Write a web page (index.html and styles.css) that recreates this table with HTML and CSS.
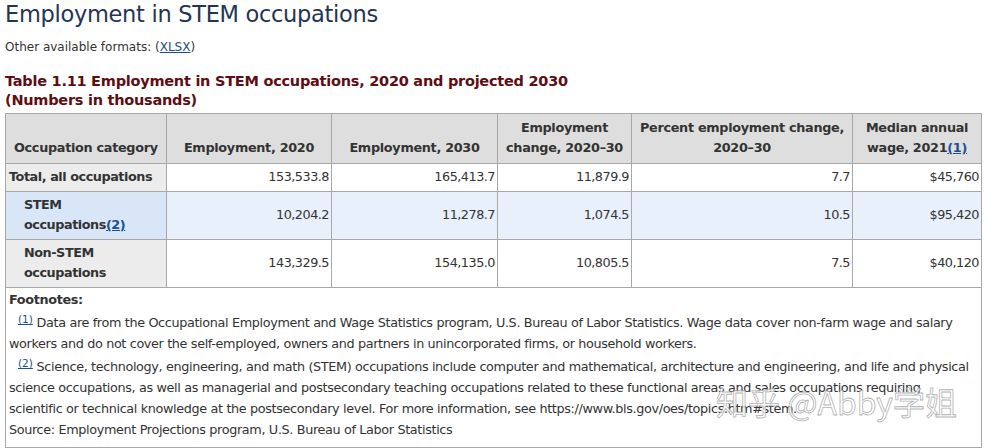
FILE: index.html
```html
<!DOCTYPE html>
<html>
<head>
<meta charset="utf-8">
<link rel="stylesheet" href="styles.css">
</head>
<body>
<div class="page">
  <h1 class="title">Employment in STEM occupations</h1>
  <p class="formats">Other available formats: (<a href="#">XLSX</a>)</p>
  <h2 class="caption">Table 1.11 Employment in STEM occupations, 2020 and projected 2030<br>(Numbers in thousands)</h2>
  <table class="data">
    <colgroup>
      <col class="c1"><col class="c2"><col class="c3"><col class="c4"><col class="c5"><col class="c6">
    </colgroup>
    <thead>
      <tr>
        <th class="lead">Occupation category</th>
        <th>Employment, 2020</th>
        <th>Employment, 2030</th>
        <th>Employment change, 2020–30</th>
        <th>Percent employment change, 2020–30</th>
        <th>Median annual wage, 2021<a href="#">(1)</a></th>
      </tr>
    </thead>
    <tbody>
      <tr class="r-total">
        <th class="stub">Total, all occupations</th>
        <td>153,533.8</td><td>165,413.7</td><td>11,879.9</td><td>7.7</td><td>$45,760</td>
      </tr>
      <tr class="r-stem">
        <th class="stub sub">STEM occupations<a href="#">(2)</a></th>
        <td>10,204.2</td><td>11,278.7</td><td>1,074.5</td><td>10.5</td><td>$95,420</td>
      </tr>
      <tr class="r-non">
        <th class="stub sub">Non-STEM occupations</th>
        <td>143,329.5</td><td>154,135.0</td><td>10,805.5</td><td>7.5</td><td>$40,120</td>
      </tr>
    </tbody>
    <tfoot>
      <tr>
        <td colspan="6" class="notes">
          <div class="notes-head">Footnotes:</div>
          <p class="note"><sup class="ref">(1)</sup> Data are from the Occupational Employment and Wage Statistics program, U.S. Bureau of Labor Statistics. Wage data cover non-farm wage and salary workers and do not cover the self-employed, owners and partners in unincorporated firms, or household workers.</p>
          <p class="note"><sup class="ref">(2)</sup> Science, technology, engineering, and math (STEM) occupations include computer and mathematical, architecture and engineering, and life and physical science occupations, as well as managerial and postsecondary teaching occupations related to these functional areas and sales occupations requiring<br>scientific or technical knowledge at the postsecondary level. For more information, see https://www.bls.gov/oes/topics.htm#stem.</p>
          <p class="source">Source: Employment Projections program, U.S. Bureau of Labor Statistics</p>
        </td>
      </tr>
    </tfoot>
  </table>
  <div class="watermark">知乎 @Abby学姐</div>
</div>
</body>
</html>
```
FILE: styles.css
```css
html, body {
  margin: 0;
  padding: 0;
  background: #ffffff;
}
.page {
  position: relative;
  padding: 0 6px 0 5px;
  font-family: "DejaVu Sans", Verdana, sans-serif;
  color: #333333;
}
.title {
  margin: 0;
  font-size: 22.5px;
  line-height: 28px;
  font-weight: normal;
  color: #243553;
  letter-spacing: -0.3px;
}
.formats {
  margin: 11px 0 0 0;
  font-size: 12px;
  line-height: 16px;
  color: #333;
}
.formats a {
  color: #1a4e8a;
}
.caption {
  margin: 17px 0 3px 0;
  font-size: 14.5px;
  line-height: 19px;
  font-weight: bold;
  color: #5f0d13;
  letter-spacing: -0.25px;
}
.data {
  width: 976px;
  border-collapse: collapse;
  border: 1px solid #a8a8a8;
  font-size: 12.8px;
  letter-spacing: -0.3px;
  table-layout: fixed;
}
.c1 { width: 161px; }
.c2 { width: 165px; }
.c3 { width: 166px; }
.c4 { width: 134px; }
.c5 { width: 221px; }
.c6 { width: 129px; }
.data th, .data td {
  border: 1px solid #a8a8a8;
  padding: 3px 2px 4px 2px;
  line-height: 20px;
}
.data thead th {
  background: #dedede;
  color: #333;
  font-weight: bold;
  vertical-align: bottom;
  text-align: center;
  height: 41px;
  padding: 3px 2px 5px 2px;
}
.data thead th.lead {
  text-align: left;
  padding-left: 8px;
}
.data a {
  color: #1d4f91;
}
.data tbody td {
  text-align: right;
  color: #333;
  letter-spacing: -0.5px;
  padding-right: 2px;
}
.stub {
  text-align: left;
  background: #ececec;
  font-weight: bold;
  color: #333;
}
.data th.stub {
  padding-left: 3px;
  letter-spacing: -0.45px;
}
.r-stem td { background: #e8f0fb; }
.r-stem th { background: #d8e6f8; }
.r-non td { background: #ffffff; }
.data th.stub.sub {
  padding-left: 18px;
  padding-right: 30px;
}
.data tfoot td.notes {
  text-align: left;
  padding: 1px 2px 7px 3px;
  font-size: 12.8px;
  letter-spacing: -0.36px;
  color: #333;
  line-height: 21px;
}
.notes-head {
  font-weight: bold;
}
.note {
  margin: 2px 0 0 0;
  text-indent: 9px;
}
.ref {
  color: #1d4f91;
  text-decoration: underline;
  font-size: 10.5px;
  line-height: 0;
  vertical-align: 4px;
  letter-spacing: 0;
}
.source {
  margin: 0;
}
.watermark {
  position: absolute;
  left: 716px;
  top: 382px;
  font-family: "Noto Sans CJK SC", "DejaVu Sans", sans-serif;
  font-size: 32px;
  line-height: 38px;
  color: rgba(255, 255, 255, 0.8);
  -webkit-text-stroke: 0.8px rgba(150, 150, 150, 0.75);
}
```
